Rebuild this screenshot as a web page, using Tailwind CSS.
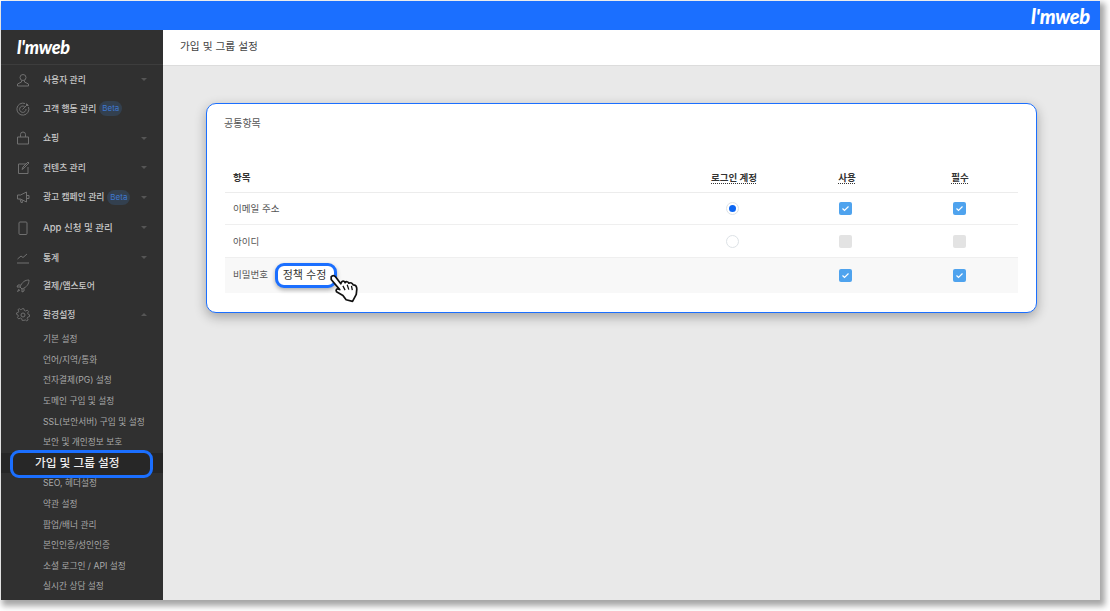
<!DOCTYPE html>
<html lang="ko">
  <head>
    <meta charset="UTF-8" />
    <title>가입 및 그룹 설정</title>
    <script src="https://cdn.jsdelivr.net/npm/@tailwindcss/browser@4"></script>
  </head>
  <body class="w-[1110px] h-[611px] overflow-hidden bg-white font-['Inter','Noto_Sans_CJK_KR',sans-serif]">
    <div class="ml-px mt-px w-[1099px] h-[599px] flex flex-col overflow-hidden shadow-[3px_4px_6px_2px_rgba(0,0,0,0.35)]">
      <!-- top bar -->
      <div class="h-[29px] shrink-0 bg-[#1b6fff] flex items-center justify-end pr-[10px]">
        <span class="font-['Lato',sans-serif] italic font-black text-[20px] leading-none tracking-[-0.2px] text-white">l'mweb</span>
      </div>

      <div class="flex flex-1 min-h-0">
        <!-- sidebar -->
        <aside class="w-[162px] shrink-0 bg-[#303030] flex flex-col text-[8.800px] leading-[14px]">
          <div class="h-[35px] shrink-0 border-b border-[#3d3d3d] flex items-center pl-[16px]">
            <span class="font-['Lato',sans-serif] italic font-black text-[18px] leading-none tracking-[-0.2px] text-white">l'mweb</span>
          </div>
          <nav class="flex flex-col">
            <a class="h-[29px] flex items-center pl-[15px] pr-[16px] text-[#c8c8c8] font-medium">
              <svg class="w-[14px] h-[14px] shrink-0 mr-[13px]" viewBox="0 0 14 14" fill="none" stroke="#707070"><circle cx="7" cy="4.5" r="3"/><path d="M5.5 7.5v1.5L1.5 11v2h11v-2L8.5 9V7.5"/></svg>
              <span class="flex-1">사용자 관리</span>
              <svg class="w-[6px] h-[3px]" viewBox="0 0 6 3"><path d="M0 0h6L3 3z" fill="#555"/></svg>
            </a>
            <a class="h-[29px] flex items-center pl-[15px] pr-[16px] text-[#c8c8c8] font-medium">
              <svg class="w-[14px] h-[14px] shrink-0 mr-[13px]" viewBox="0 0 14 14" fill="none" stroke="#707070"><path d="M9 1.5A6 6 0 1 0 12.5 5"/><path d="M8.5 4.5A3.2 3.2 0 1 0 10 7"/><path d="M6.5 7.5 12 2M10.5 1.5V3.500H12.500"/></svg>
              <span>고객 행동 관리</span>
              <span class="ml-[3px] h-[15px] px-[3px] rounded-full bg-[#33404f] text-[#3f78cf] text-[8px] leading-[15px] font-normal">Beta</span>
            </a>
            <a class="h-[30px] flex items-center pl-[15px] pr-[16px] text-[#c8c8c8] font-medium">
              <svg class="w-[14px] h-[14px] shrink-0 mr-[13px]" viewBox="0 0 14 14" fill="none" stroke="#707070"><path d="M1.500 6h11v7h-11zM4.500 6V3.500a2.500 2.500 0 0 1 5 0V6"/></svg>
              <span class="flex-1">쇼핑</span>
              <svg class="w-[6px] h-[3px]" viewBox="0 0 6 3"><path d="M0 0h6L3 3z" fill="#555"/></svg>
            </a>
            <a class="h-[29px] flex items-center pl-[15px] pr-[16px] text-[#c8c8c8] font-medium">
              <svg class="w-[14px] h-[14px] shrink-0 mr-[13px]" viewBox="0 0 14 14" fill="none" stroke="#707070"><path d="M10 3H2.500v9.500H12V6"/><path d="M6 8.500 7 6l5-5 1 1-5 5z"/></svg>
              <span class="flex-1">컨텐츠 관리</span>
              <svg class="w-[6px] h-[3px]" viewBox="0 0 6 3"><path d="M0 0h6L3 3z" fill="#555"/></svg>
            </a>
            <a class="h-[30px] flex items-center pl-[15px] pr-[16px] text-[#c8c8c8] font-medium">
              <svg class="w-[14px] h-[14px] shrink-0 mr-[13px]" viewBox="0 0 14 14" fill="none" stroke="#707070"><path d="M1.500 5v4h3l6 3V2l-6 3zM4 9l1 3.500h1.500L6 10M10.500 5.500H13v3h-2.500"/></svg>
              <span>광고 캠페인 관리</span>
              <span class="ml-[3px] h-[15px] px-[3px] rounded-full bg-[#33404f] text-[#3f78cf] text-[8px] leading-[15px] font-normal">Beta</span>
              <span class="flex-1"></span>
              <svg class="w-[6px] h-[3px]" viewBox="0 0 6 3"><path d="M0 0h6L3 3z" fill="#555"/></svg>
            </a>
            <a class="h-[31px] flex items-center pl-[15px] pr-[16px] text-[#c8c8c8] font-medium">
              <svg class="w-[14px] h-[14px] shrink-0 mr-[13px]" viewBox="0 0 14 14" fill="none" stroke="#707070"><rect x="3" y="1" width="8" height="12.500" rx="1"/></svg>
              <span class="flex-1 text-[9.500px]">App 신청 및 관리</span>
              <svg class="w-[6px] h-[3px]" viewBox="0 0 6 3"><path d="M0 0h6L3 3z" fill="#555"/></svg>
            </a>
            <a class="h-[29px] flex items-center pl-[15px] pr-[16px] text-[#c8c8c8] font-medium">
              <svg class="w-[14px] h-[14px] shrink-0 mr-[13px]" viewBox="0 0 14 14" fill="none" stroke="#707070"><path d="M1.500 8 5 5l2 1.500L11 3M1 12h12"/></svg>
              <span class="flex-1">통계</span>
              <svg class="w-[6px] h-[3px]" viewBox="0 0 6 3"><path d="M0 0h6L3 3z" fill="#555"/></svg>
            </a>
            <a class="h-[28px] flex items-center pl-[15px] pr-[16px] text-[#c8c8c8] font-medium">
              <svg class="w-[14px] h-[14px] shrink-0 mr-[13px]" viewBox="0 0 14 14" fill="none" stroke="#707070"><path d="M13 1C9 1 6 3 4 8l2 2c5-2 7-5 7-9zM4.500 6H2L1 8h3M8 9.500V12l-2 1v-3M3 10l-1.500 2.500L4 11"/></svg>
              <span class="flex-1">결제/앱스토어</span>
            </a>
            <a class="h-[29px] flex items-center pl-[15px] pr-[16px] text-[#c8c8c8] font-medium">
              <svg class="w-[14px] h-[14px] shrink-0 mr-[13px]" viewBox="0 0 14 14" fill="none" stroke="#707070"><circle cx="7" cy="7" r="2"/><path d="M6 1h2l.4 1.800 1.500.7L11.500 2.500 13 4l-1 1.600.6 1.400 1.400.5v2l-1.800.4-.7 1.500 1 1.600-1.500 1-1.600-1-1.400.6L8 13.500H6l-.4-1.800-1.500-.7-1.600 1L1 10.500l1-1.600L1.400 7.500 0 7V5.500l1.800-.4.7-1.500-1-1.600L3 1l1.600 1 1-.4z" transform="translate(.5 -.2) scale(.93)"/></svg>
              <span class="flex-1">환경설정</span>
              <svg class="w-[6px] h-[3px]" viewBox="0 0 6 3"><path d="M0 3h6L3 0z" fill="#555"/></svg>
            </a>
          </nav>
          <ul class="flex flex-col pl-[42px] font-normal text-[#a9a9a9] text-[8.700px]">
            <li class="h-[20.600px] flex items-center">기본 설정</li>
            <li class="h-[20.600px] flex items-center">언어/지역/통화</li>
            <li class="h-[20.600px] flex items-center">전자결제(PG) 설정</li>
            <li class="h-[20.600px] flex items-center">도메인 구입 및 설정</li>
            <li class="h-[20.600px] flex items-center">SSL(보안서버) 구입 및 설정</li>
            <li class="h-[20.600px] flex items-center">보안 및 개인정보 보호</li>
            <li class="h-[20.600px] -ml-[42px] pl-[34px] relative flex items-center bg-[#262626]">
              <span class="absolute left-[9px] -top-[3px] w-[143px] h-[28px] rounded-[9px] border-[3px] border-[#1b6fff] bg-[#272727]"></span>
              <span class="relative text-[11.700px] font-medium text-[#eeeeee]">가입 및 그룹 설정</span>
            </li>
            <li class="h-[20.600px] flex items-center">SEO, 헤더설정</li>
            <li class="h-[20.600px] flex items-center">약관 설정</li>
            <li class="h-[20.600px] flex items-center">팝업/배너 관리</li>
            <li class="h-[20.600px] flex items-center">본인인증/성인인증</li>
            <li class="h-[20.600px] flex items-center">소셜 로그인 / API 설정</li>
            <li class="h-[20.600px] flex items-center">실시간 상담 설정</li>
          </ul>
        </aside>

        <!-- main -->
        <main class="flex-1 min-w-0 bg-[#e9e9e9] flex flex-col">
          <header class="h-[36px] shrink-0 bg-white border-b border-[#dcdcdc] flex items-center pl-[17px] text-[10.700px] text-[#444]">가입 및 그룹 설정</header>
          <div class="pl-[43px] pt-[37px]">
            <section class="relative w-[831px] h-[210px] bg-white rounded-[10px] border border-[#1b6fff] shadow-[0_4px_12px_rgba(0,0,0,0.3)] pt-[12px] px-[17px] text-[9.500px] text-[#555]">
              <h2 class="h-[14px] leading-[14px] text-[#555] text-[10px]">공통항목</h2>
              <div class="mt-[30px] ml-px w-[793px] text-[#555]">
                <div class="h-[33px] pt-[4px] border-b border-[#ececec] flex items-center font-bold text-[#333]">
                  <span class="pl-[8px] w-[452px]">항목</span>
                  <span class="w-[114px] text-center underline decoration-dotted underline-offset-2">로그인 계정</span>
                  <span class="w-[112px] text-center underline decoration-dotted underline-offset-2">사용</span>
                  <span class="w-[114px] text-center underline decoration-dotted underline-offset-2">필수</span>
                </div>
                <div class="h-[32px] border-b border-[#efefef] flex items-center">
                  <span class="pl-[8px] pt-[2px] w-[450px]">이메일 주소</span>
                  <span class="w-[114px] flex justify-center"><span class="w-[13px] h-[13px] rounded-full border border-[#dde2e6] flex items-center justify-center"><span class="w-[7px] h-[7px] rounded-full bg-[#0d66f2]"></span></span></span>
                  <span class="w-[112px] flex justify-center">
                    <svg class="w-[13px] h-[13px]" viewBox="0 0 13 13"><rect width="13" height="13" rx="2" fill="#4fa3ee"/><path d="M3.500 6.500 5.500 8.500 9.500 4.500" fill="none" stroke="#fff" stroke-width="1.200"/></svg>
                  </span>
                  <span class="w-[116px] flex justify-center">
                    <svg class="w-[13px] h-[13px]" viewBox="0 0 13 13"><rect width="13" height="13" rx="2" fill="#4fa3ee"/><path d="M3.500 6.500 5.500 8.500 9.500 4.500" fill="none" stroke="#fff" stroke-width="1.200"/></svg>
                  </span>
                </div>
                <div class="h-[33px] border-b border-[#efefef] flex items-center">
                  <span class="pl-[8px] pt-[2px] w-[450px]">아이디</span>
                  <span class="w-[114px] flex justify-center"><span class="w-[13px] h-[13px] rounded-full border border-[#dde2e6] bg-white"></span></span>
                  <span class="w-[112px] flex justify-center"><span class="w-[13px] h-[13px] rounded-[2px] bg-[#e3e3e3]"></span></span>
                  <span class="w-[116px] flex justify-center"><span class="w-[13px] h-[13px] rounded-[2px] bg-[#e3e3e3]"></span></span>
                </div>
                <div class="h-[35px] pb-[1px] bg-[#f8f8f8] flex items-center">
                  <span class="pl-[8px] w-[450px] flex items-center">비밀번호
                    <span class="relative ml-[7px] h-[25px] w-[62px] pr-[3px] rounded-[9px] border-[3px] border-[#1b6fff] bg-white shadow-[0_2px_4px_rgba(0,0,0,0.3)] flex items-center justify-center text-[11px] text-[#333] whitespace-nowrap">정책 수정</span>
                  </span>
                  <span class="w-[114px]"></span>
                  <span class="w-[112px] flex justify-center">
                    <svg class="w-[13px] h-[13px]" viewBox="0 0 13 13"><rect width="13" height="13" rx="2" fill="#4fa3ee"/><path d="M3.500 6.500 5.500 8.500 9.500 4.500" fill="none" stroke="#fff" stroke-width="1.200"/></svg>
                  </span>
                  <span class="w-[116px] flex justify-center">
                    <svg class="w-[13px] h-[13px]" viewBox="0 0 13 13"><rect width="13" height="13" rx="2" fill="#4fa3ee"/><path d="M3.500 6.500 5.500 8.500 9.500 4.500" fill="none" stroke="#fff" stroke-width="1.200"/></svg>
                  </span>
                </div>
              </div>
              <!-- hand cursor -->
              <svg class="absolute left-[121px] top-[168px] w-[32px] h-[32px]" viewBox="0 0 30 30">
                <path d="M3 4.500 C4 3 6 3 7 4.500 L12 11 L13 9 C14.500 8 15.500 9 16 10 C17 8.500 19 9 19.500 10.500 C21 9.500 23 10.500 23.500 12 C25.500 12 27 13.500 27 16 L26.500 21 L23 27.500 L17 26 L14 22 L8 18.500 C7 17 8 15.500 10 16 L11 16.500 L3 7 Z" fill="#fff" stroke="#111" stroke-width="1.600" stroke-linejoin="round"/>
                <path d="M14 13l2 4M18 12l1.500 4.500M22 13l.8 4" stroke="#111" stroke-width="1.200" fill="none"/>
              </svg>
            </section>
          </div>
        </main>
      </div>
    </div>
  </body>
</html>
